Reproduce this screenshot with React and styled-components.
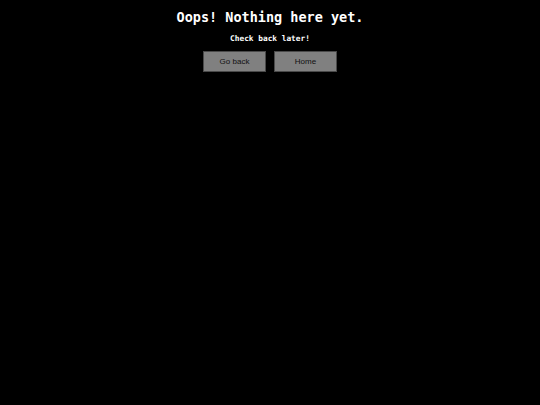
import React from 'react'
import styled, { createGlobalStyle } from 'styled-components'

const GlobalStyle = createGlobalStyle`
  html, body {
    margin: 0;
    padding: 0;
    background: #000;
  }
  body {
    min-height: 100vh;
  }
`

const Page = styled.main`
  display: flex;
  flex-direction: column;
  align-items: center;
  min-height: 100vh;
  padding-top: 8px;
  box-sizing: border-box;
  background: #000;
  color: #fff;
  font-family: "DejaVu Sans Mono", monospace;
`

const Title = styled.h1`
  margin: 0;
  font-size: 13.5px;
  font-weight: bold;
  line-height: 18px;
`

const Subtitle = styled.p`
  margin: 8px 0 0;
  font-size: 7.8px;
  font-weight: bold;
  line-height: 10px;
`

const Actions = styled.div`
  display: flex;
  gap: 8px;
  margin-top: 7px;
`

const Button = styled.button`
  width: 63px;
  height: 21px;
  padding: 0;
  background: #808080;
  border: 1px solid #4a4a4a;
  color: #111;
  font-family: "Liberation Sans", Arial, sans-serif;
  font-size: 8px;
  cursor: pointer;
`

export default function App() {
  return (
    <>
      <GlobalStyle />
      <Page>
        <Title>Oops! Nothing here yet.</Title>
        <Subtitle>Check back later!</Subtitle>
        <Actions>
          <Button onClick={() => window.history.back()}>Go back</Button>
          <Button>Home</Button>
        </Actions>
      </Page>
    </>
  )
}
